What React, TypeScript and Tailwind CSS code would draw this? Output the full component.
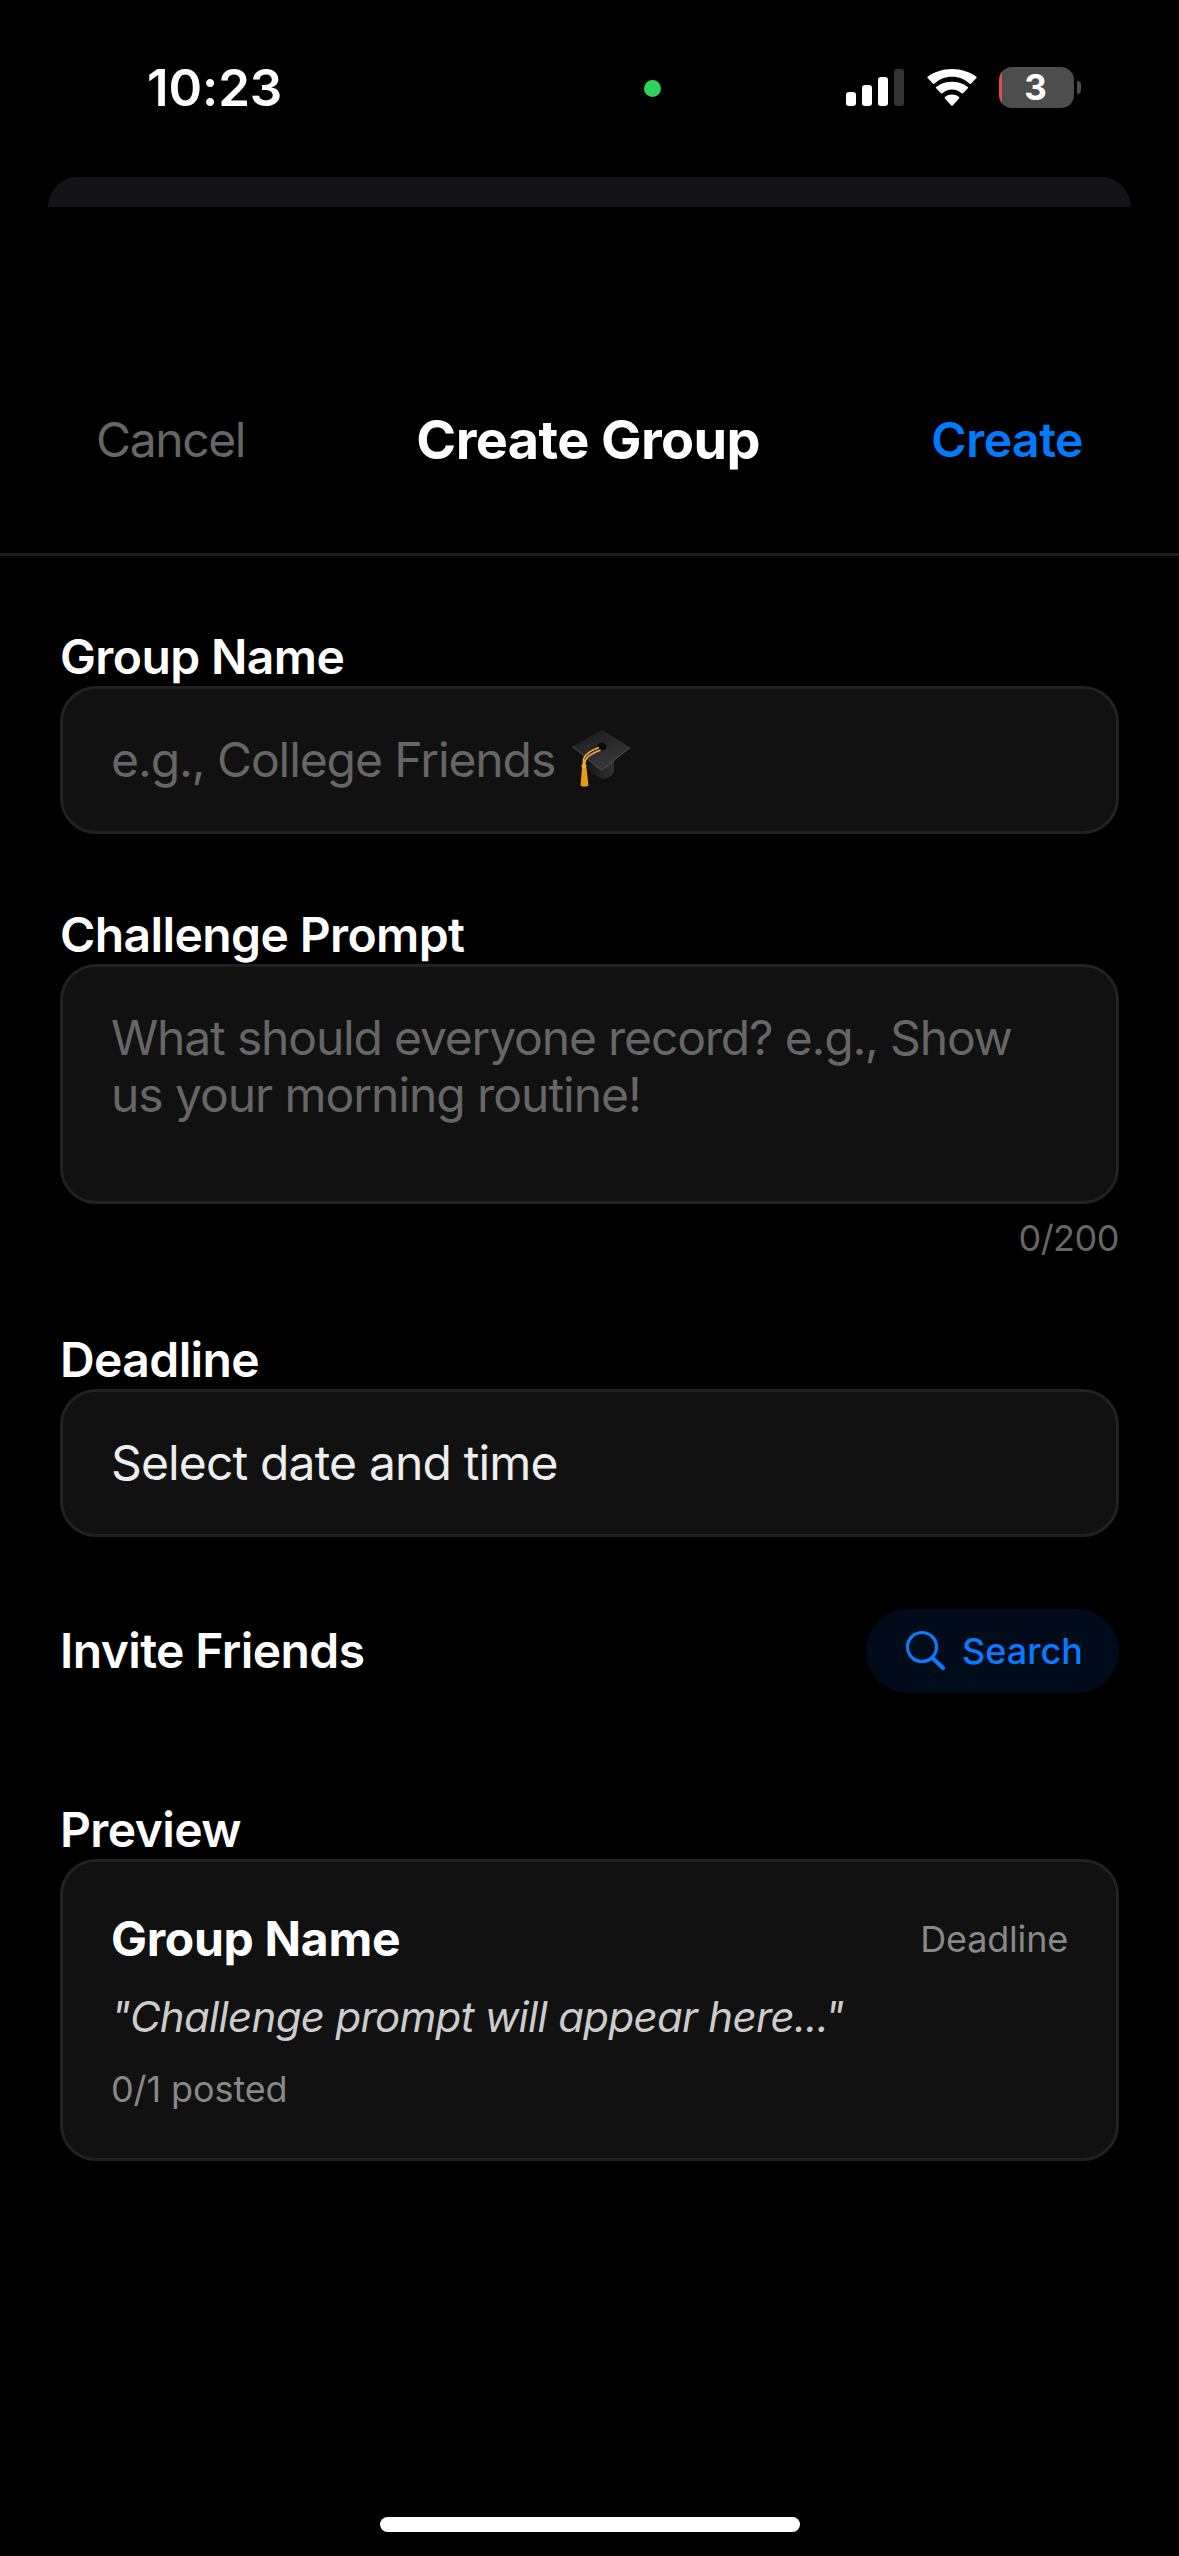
import React from 'react';

function StatusBar() {
  return (
    <div className="flex h-[177px] shrink-0 items-start pl-[147px] pr-[98px] pt-[56px]">
      <span className="w-[134px] whitespace-nowrap text-[51px] leading-[64px] font-semibold tracking-[-0.1px]">
        10:23
      </span>
      <span className="ml-[363px] mt-[24px] size-[17px] rounded-full bg-[#30d158]" />
      <div className="ml-auto flex items-start pt-[11px]">
        {/* signal */}
        <svg className="mt-[2px] h-[37px] w-[58px]" viewBox="0 0 58 37" fill="#fff">
          <rect x="0" y="23" width="10" height="14" rx="3" />
          <rect x="16" y="16" width="10" height="21" rx="3" />
          <rect x="32" y="8" width="10" height="29" rx="3" />
          <rect x="48" y="0" width="10" height="37" rx="3" fill="#333" />
        </svg>
        {/* wifi */}
        <svg className="ml-[23px] mt-[2px] h-[37px] w-[50px]" viewBox="0 0 51 37" preserveAspectRatio="none" fill="#fff">
          <path d="M25.5 7.7c6.9 0 13.200 2.600 18 7 .4.400 1 .4 1.300 0l5.600-5.600c.4-.4.400-1 0-1.400C44 3.200 35.200 0 25.500 0S7 3.200.6 7.700c-.4.400-.4 1 0 1.400l5.600 5.600c.3.400.9.400 1.300 0 4.800-4.400 11.100-7 18-7z" />
          <path d="M25.500 20.400c3.700 0 7.200 1.400 9.900 3.800.4.400.9.400 1.300 0l5-5c.4-.4.400-1 0-1.300-4.300-3.500-10.500-5.200-16.200-5.200s-11.900 1.700-16.200 5.200c-.4.300-.4.900 0 1.300l5 5c.4.400.9.400 1.300 0 2.700-2.400 6.200-3.800 9.900-3.800z" />
          <path d="M32.700 29.400c.4-.4.400-1 0-1.300-1.900-1.700-4.500-2.500-7.200-2.500s-5.300.8-7.200 2.500c-.4.300-.4.900 0 1.300l6.500 7.200c.4.400 1 .4 1.400 0z" />
        </svg>
        {/* battery */}
        <div className="ml-[22px] flex items-center gap-[3px]">
          <div className="flex h-[41px] w-[75px] items-center justify-center overflow-hidden rounded-[13px] bg-[linear-gradient(to_right,#e5484d_3px,#4d4d4d_3px)] pr-[2px]">
            <span className="text-[35px] leading-[41px] font-bold">3</span>
          </div>
          <span className="h-[13px] w-[4px] rounded-r-full bg-[#4d4d4d]" />
        </div>
      </div>
    </div>
  );
}

function GraduationCap() {
  return (
    <svg className="ml-[17px] h-[60px] w-[60px] shrink-0" viewBox="0 0 60 60">
      <defs>
        <linearGradient id="board" x1="0" y1="0" x2="0.5" y2="1">
          <stop offset="0" stopColor="#1a1a1b" />
          <stop offset="1" stopColor="#38383a" />
        </linearGradient>
        <linearGradient id="base" x1="0" y1="0" x2="1" y2="0">
          <stop offset="0" stopColor="#151515" />
          <stop offset="1" stopColor="#333335" />
        </linearGradient>
      </defs>
      <path d="M15 27 42 31v12c-2 4-7 7-12 7-3-1-10-6-15-11z" fill="url(#base)" />
      <path d="M30.300 1 58 18.500 29.500 41.500.500 17.500z" fill="url(#board)" />
      <path d="M58 18.500 29.500 41.500.500 17.500" fill="none" stroke="#505052" strokeWidth="1" />
      <ellipse cx="30" cy="17.500" rx="4.500" ry="4" fill="#080808" />
      <path
        d="M27 18.500C20 21 13 25 11.500 30V37M28.500 21C21 24 15 27 13.500 31L12 37"
        fill="none"
        stroke="#f2ab35"
        strokeWidth="1.800"
      />
      <circle cx="12" cy="37" r="2.500" fill="#f2ab35" />
      <path d="M10 39h4.500l2 17.500q-4 2.500-8 0z" fill="#e8981c" />
    </svg>
  );
}

const labelClass = 'text-[48px] leading-[57px] font-semibold tracking-[-0.6px]';
const boxClass = 'rounded-[36px] border-[3px] border-[#222] bg-[#111] px-[48px]';

export default function App() {
  return (
    <div className="flex h-[2556px] w-[1179px] flex-col overflow-hidden bg-black font-['Inter','Liberation_Sans',sans-serif] text-white">
      <StatusBar />
      <div className="mx-[48px] h-[30px] shrink-0 rounded-t-[30px] bg-[#141416]" />

      <header className="flex h-[349px] shrink-0 items-start justify-between border-b-[3px] border-[#1e1e1e] px-[96px] pt-[200px] leading-[66px]">
        <span className="text-[48px] tracking-[-1.4px] text-[#666]">Cancel</span>
        <h1 className="text-[54px] font-bold tracking-[-0.6px]">Create Group</h1>
        <span className="text-[48px] font-semibold tracking-[-0.5px] text-[#007aff]">Create</span>
      </header>

      <main className="flex flex-col px-[60px] pt-[72px]">
        <label className={labelClass}>Group Name</label>
        <div className={`${boxClass} mt-px flex h-[148px] items-center pb-[2px]`}>
          <span className="whitespace-nowrap text-[48px] leading-[57px] tracking-[-1.08px] text-[#666]">
            e.g., College Friends
          </span>
          <GraduationCap />
        </div>

        <label className={`${labelClass} mt-[72px]`}>Challenge Prompt</label>
        <div className={`${boxClass} mt-px h-[240px] pt-[42px] text-[48px] leading-[57px] text-[#666]`}>
          <p className="whitespace-nowrap tracking-[-1.18px]">What should everyone record? e.g., Show</p>
          <p className="whitespace-nowrap tracking-[-1.05px]">us your morning routine!</p>
        </div>
        <span className="mt-[12px] self-end text-[36px] leading-[44px] tracking-[-0.5px] text-[#666]">0/200</span>

        <label className={`${labelClass} mt-[71px]`}>Deadline</label>
        <div className={`${boxClass} mt-px flex h-[148px] items-center pb-[2px]`}>
          <span className="text-[48px] leading-[57px] tracking-[-0.85px] text-[#eee]">Select date and time</span>
        </div>

        <div className="mt-[72px] flex h-[84px] items-center justify-between">
          <span className={`${labelClass} pb-[2px]`}>Invite Friends</span>
          <button className="flex h-[84px] w-[253px] items-center rounded-full bg-[#000c19] pl-[38px] text-[#0a7aff]">
            <svg className="h-[42px] w-[42px]" viewBox="0 0 42 42" fill="none" stroke="currentColor" strokeLinecap="round">
              <circle cx="18" cy="17" r="14.500" strokeWidth="3.200" />
              <path d="M28.500 28 39 38" strokeWidth="4.200" />
            </svg>
            <span className="ml-[16px] text-[36px] leading-[44px] font-medium">Search</span>
          </button>
        </div>

        <label className={`${labelClass} mt-[108px]`}>Preview</label>
        <div className={`${boxClass} mt-px h-[302px] pt-[48px]`}>
          <div className="flex items-center justify-between">
            <span className="text-[48px] leading-[57px] font-bold tracking-[-0.3px]">Group Name</span>
            <span className="pt-[2px] text-[36px] leading-[43px] tracking-[-0.2px] text-[#888]">Deadline</span>
          </div>
          <p className="mt-[20px] whitespace-nowrap text-[42px] leading-[60px] tracking-[-0.68px] text-[#ccc] italic">
            "Challenge prompt will appear here..."
          </p>
          <p className="mt-[21px] text-[36px] leading-[43px] tracking-[-0.1px] text-[#888]">0/1 posted</p>
        </div>
      </main>

      <div className="mt-auto mb-[24px] h-[15px] w-[420px] shrink-0 self-center rounded-full bg-white" />
    </div>
  );
}
